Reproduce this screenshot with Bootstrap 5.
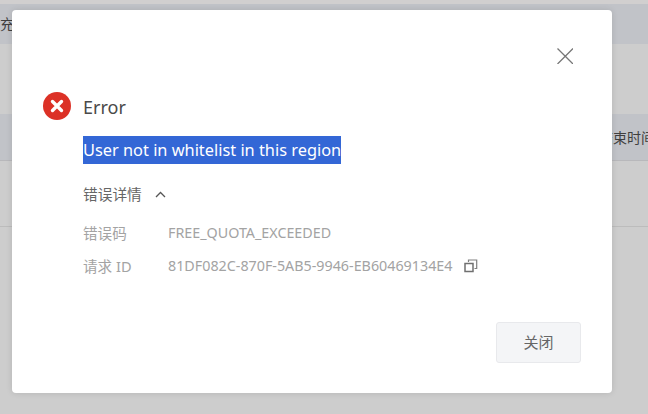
<!DOCTYPE html>
<html lang="zh">
<head>
<meta charset="utf-8">
<title>Error</title>
<link href="https://cdn.jsdelivr.net/npm/bootstrap@5.3.0/dist/css/bootstrap.min.css" rel="stylesheet">
<style>
html,body{height:414px;overflow:hidden}
body{background:#cdcdcd;font-family:"Noto Sans","Noto Sans CJK SC",sans-serif;color:#3f3f3f;position:relative}
.page-top{height:4px;background:#d1cfcf}
.band-a{height:40px;background:#c1c3c8;padding-left:0;font-size:14px;line-height:40px;white-space:nowrap;overflow:hidden}
.gap-a{height:70px}
.band-b{height:47px;background:#c1c3c8;border-bottom:1px solid #b8b8bb;font-size:14px;line-height:47px;padding-left:599px;white-space:nowrap;overflow:hidden}
.gap-b{height:66px;border-bottom:1px solid #bcbcbc}
.dialog-box{position:absolute;left:12px;top:10px;width:600px;height:383px;background:#fff;border-radius:4px;box-shadow:0 0 6px rgba(0,0,0,.12);padding:0 31px;border:0}
.close-x{position:absolute;left:545px;top:38px;width:16px;height:16px;padding:0;border:0;background:none;line-height:0}
.head-row{margin-top:81px;height:30px;gap:12px}
.err-title{font-size:18px;line-height:30px;color:#4a4a4a;padding-top:2px}
.msg-line{margin-left:40px;margin-top:15px;height:28px}
.msg-sel{display:inline-block;background:#3367d6;color:#fff;font-size:16.35px;line-height:28px;height:28px;white-space:nowrap}
.detail-toggle{margin-left:40px;margin-top:18px;height:24px;font-size:14.7px;line-height:24px;color:#666;gap:13px}
.info-row{margin-left:40px;font-size:14.3px;line-height:20px;color:#a3a3a3;height:20px}
.info-first{margin-top:17px}
.info-next{margin-top:13px}
.info-key{width:85px;flex:none;font-size:14.6px}
.info-val{white-space:nowrap}
.copy-mark{margin-left:12px;line-height:0}
.close-btn{position:absolute;left:484px;top:312px;width:85px;height:41px;background:#f4f5f7;border:1px solid #e8e9ec;border-radius:3px;font-size:15px;color:#666;padding:0}
.close-btn:hover{background:#f4f5f7;color:#666;border-color:#e8e9ec}
</style>
</head>
<body>
<div class="page-top"></div>
<div class="band-a">充值</div>
<div class="gap-a"></div>
<div class="band-b">结束时间</div>
<div class="gap-b"></div>
<div class="dialog-box" role="dialog">
  <button class="close-x" type="button" aria-label="Close">
    <svg width="16" height="16" viewBox="0 0 16 16"><path d="M.5.5l15.500 15.500M16 .5L.5 16" stroke="#777" stroke-width="1.300" fill="none"/></svg>
  </button>
  <div class="d-flex align-items-center head-row">
    <svg width="28" height="28" viewBox="0 0 28 28"><circle cx="14" cy="14" r="14" fill="#dc3126"/><path d="M9.500 9.500l9 9M18.500 9.500l-9 9" stroke="#fff" stroke-width="3.400" stroke-linecap="round"/></svg>
    <div class="err-title">Error</div>
  </div>
  <div class="msg-line"><span class="msg-sel">User not in whitelist in this region</span></div>
  <div class="d-flex align-items-center detail-toggle">
    <span>错误详情</span>
    <svg width="11" height="7" viewBox="0 0 11 7"><path d="M1 6l4.500-4.500L10 6" stroke="#555" stroke-width="1.300" fill="none"/></svg>
  </div>
  <div class="d-flex info-row info-first"><div class="info-key">错误码</div><div class="info-val">FREE_QUOTA_EXCEEDED</div></div>
  <div class="d-flex align-items-center info-row info-next"><div class="info-key">请求 ID</div><div class="info-val">81DF082C-870F-5AB5-9946-EB60469134E4</div>
    <span class="copy-mark"><svg width="14" height="14" viewBox="0 0 14 14"><path d="M1 4.500h8v8H1z" fill="none" stroke="#707070" stroke-width="1.500"/><path d="M4.500 3V1h8.200v8.500H10.500" fill="none" stroke="#808080" stroke-width="1.200"/></svg></span>
  </div>
  <button class="btn close-btn" type="button">关闭</button>
</div>
<script src="https://cdn.jsdelivr.net/npm/bootstrap@5.3.0/dist/js/bootstrap.bundle.min.js"></script>
</body>
</html>
